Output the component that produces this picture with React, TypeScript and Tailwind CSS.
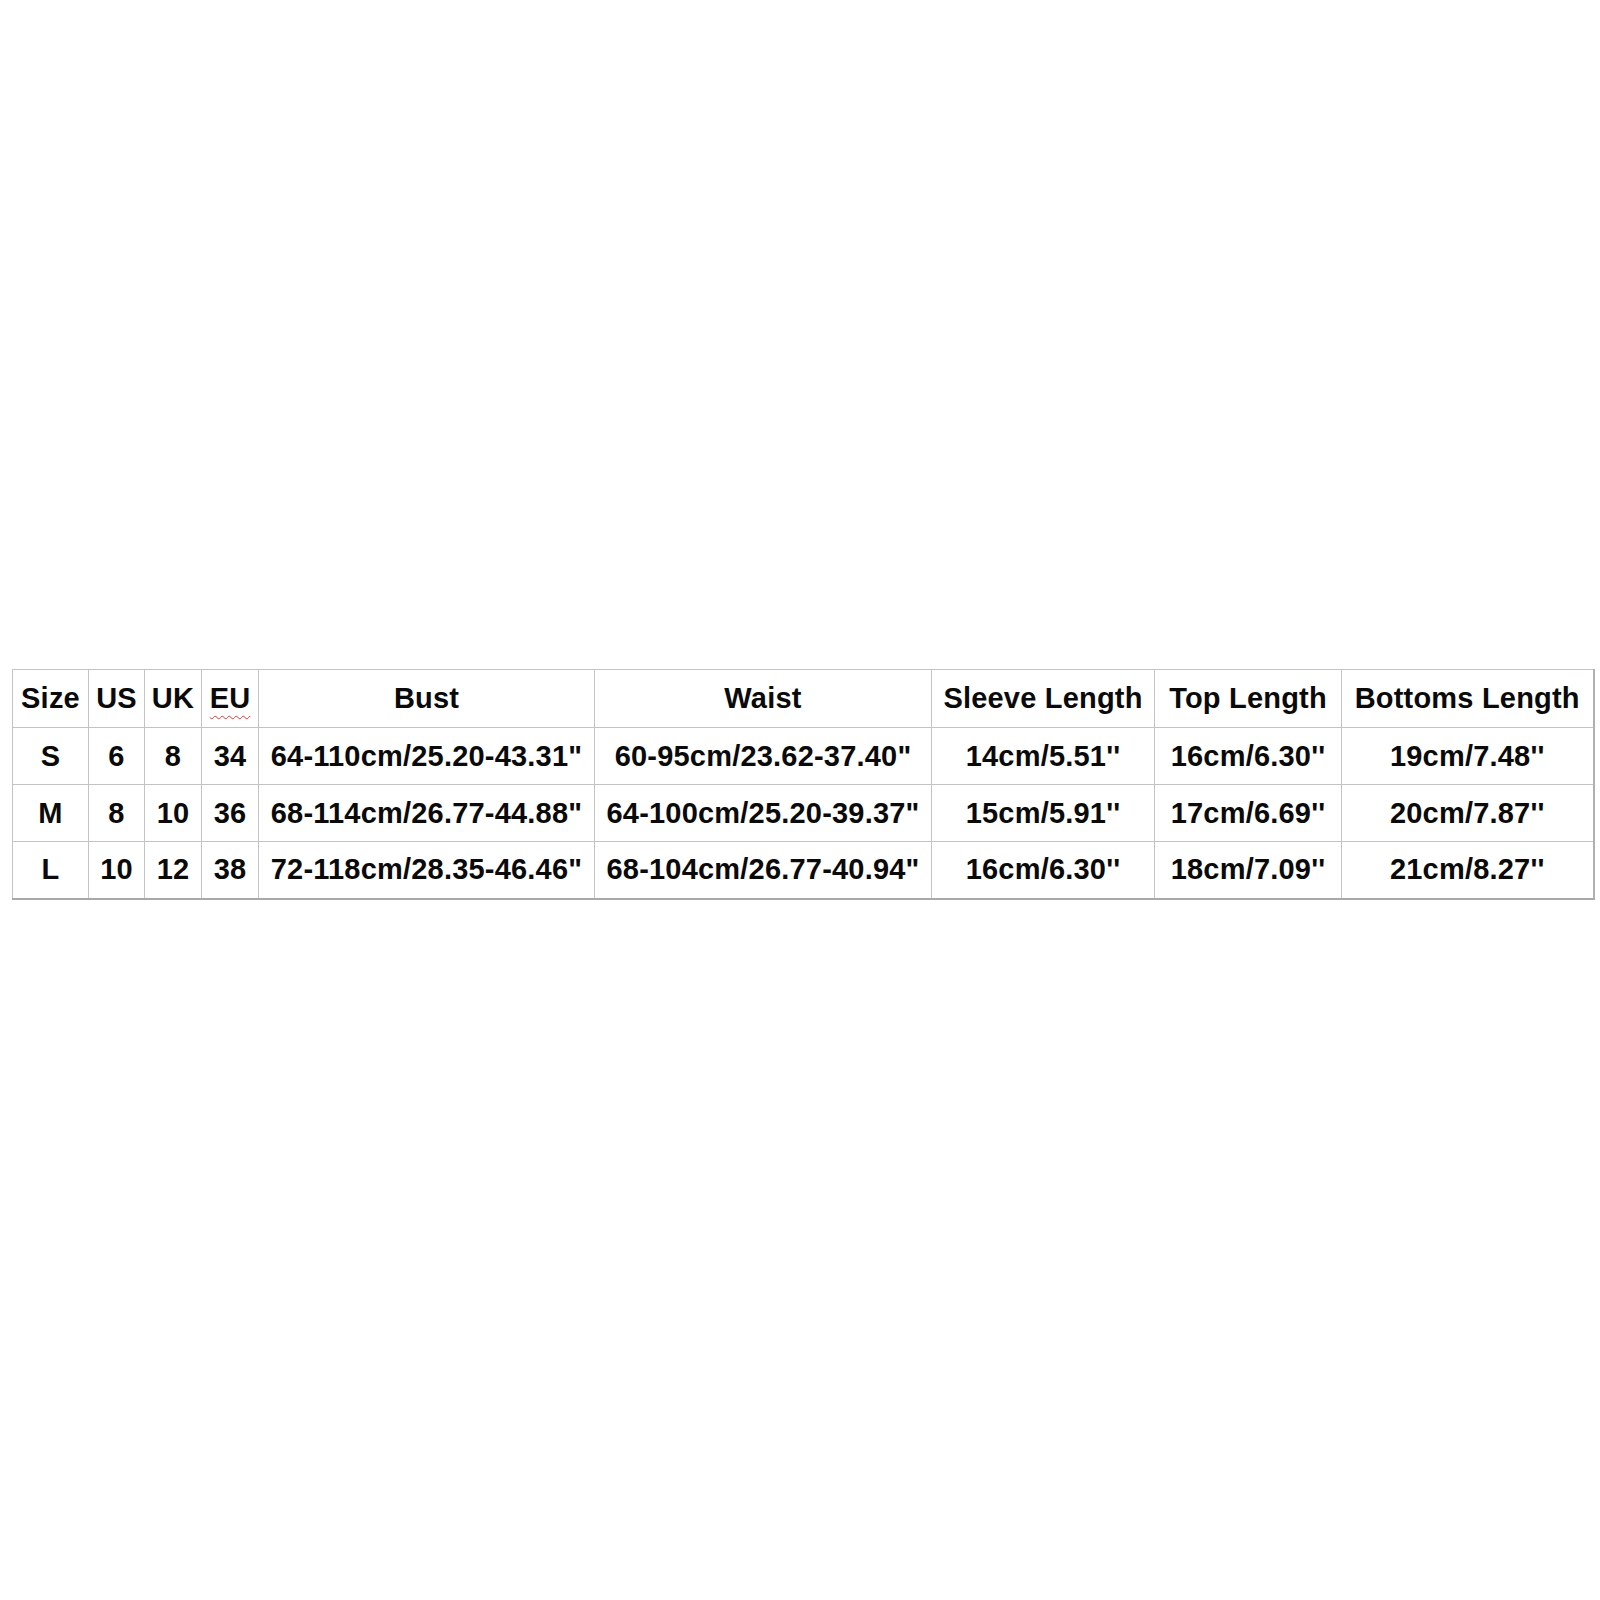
const cols = [
  { label: 'Size', w: 'w-[76px]' },
  { label: 'US', w: 'w-[56px]' },
  { label: 'UK', w: 'w-[57px]' },
  { label: 'EU', w: 'w-[57px]' },
  { label: 'Bust', w: 'w-[336px]' },
  { label: 'Waist', w: 'w-[337px]' },
  { label: 'Sleeve Length', w: 'w-[223px]' },
  { label: 'Top Length', w: 'w-[187px]' },
  { label: 'Bottoms Length', w: 'w-[252px]' },
];

const rows = [
  ['S', '6', '8', '34', '64-110cm/25.20-43.31"', '60-95cm/23.62-37.40"', '14cm/5.51\'\'', '16cm/6.30\'\'', '19cm/7.48\'\''],
  ['M', '8', '10', '36', '68-114cm/26.77-44.88"', '64-100cm/25.20-39.37"', '15cm/5.91\'\'', '17cm/6.69\'\'', '20cm/7.87\'\''],
  ['L', '10', '12', '38', '72-118cm/28.35-46.46"', '68-104cm/26.77-40.94"', '16cm/6.30\'\'', '18cm/7.09\'\'', '21cm/8.27\'\''],
];

export default function App() {
  return (
    <div className="w-[1600px] h-[1600px] bg-white pt-[669px] pl-[12px] font-['Liberation_Sans',Arial,sans-serif] text-[#0a0a0a]">
      <table className="table-fixed border-collapse w-[1581px] border-r-2 border-b-2 border-r-[#b0b0b0] border-b-[#a8a8a8]">
        <thead>
          <tr className="h-[58px]">
            {cols.map((c) => (
              <th
                key={c.label}
                className={`${c.w} border border-[#c4c4c4] p-0 text-center align-middle text-[29px] tracking-[0.2px] font-bold leading-none whitespace-nowrap`}
              >
                {c.label === 'EU' ? (
                  <span className="underline decoration-wavy decoration-[#d04040] decoration-1 underline-offset-[7px]">EU</span>
                ) : (
                  c.label
                )}
              </th>
            ))}
          </tr>
        </thead>
        <tbody>
          {rows.map((r) => (
            <tr key={r[0]} className="h-[57px]">
              {r.map((v, i) => (
                <td
                  key={i}
                  className="border border-[#c4c4c4] p-0 text-center align-middle text-[29px] tracking-[0.2px] font-bold leading-none whitespace-nowrap"
                >
                  {v}
                </td>
              ))}
            </tr>
          ))}
        </tbody>
      </table>
    </div>
  );
}
